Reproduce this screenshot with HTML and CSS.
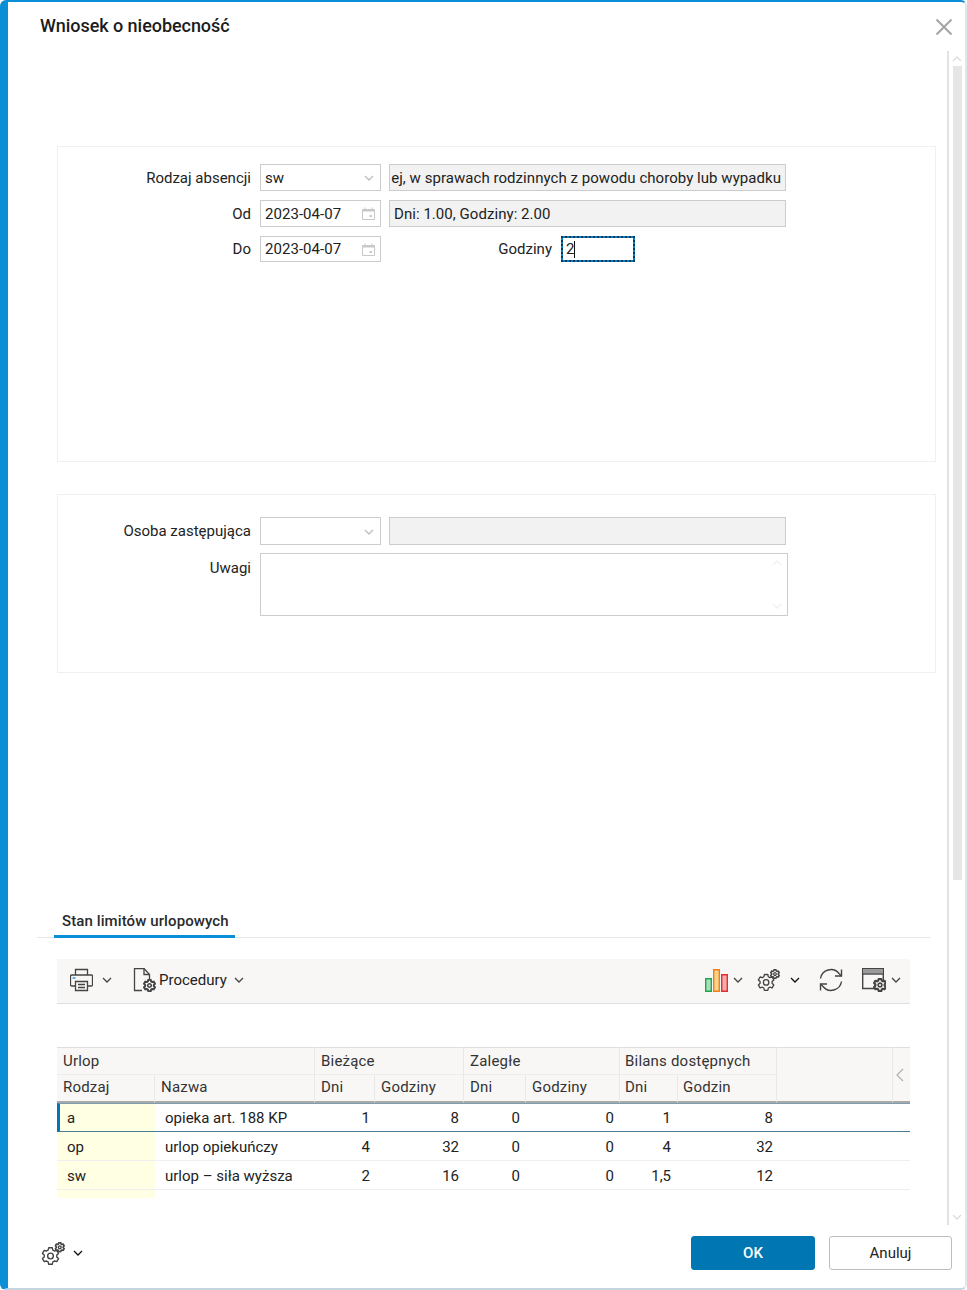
FILE: index.html
```html
<!DOCTYPE html>
<html lang="pl">
<head>
<meta charset="utf-8">
<title>Wniosek o nieobecność</title>
<link rel="stylesheet" href="styles.css">
</head>
<body>
<svg class="defs" width="0" height="0" aria-hidden="true">
  <symbol id="gear" viewBox="-9 -9 18 18">
    <path d="M-1.66-7.83L1.66-7.83L2.25-5.56L3.69-4.73L5.95-5.35L7.61-2.47L5.94-.84L5.94.84L7.61 2.47L5.95 5.35L3.69 4.73L2.25 5.56L1.66 7.83L-1.66 7.83L-2.25 5.56L-3.69 4.73L-5.95 5.35L-7.61 2.47L-5.94.84L-5.94-.84L-7.61-2.47L-5.95-5.35L-3.69-4.73L-2.25-5.56Z" fill="none" stroke="#444" stroke-width="1.3" stroke-linejoin="round"/>
    <circle r="2.7" fill="none" stroke="#444" stroke-width="1.3"/>
  </symbol>
  <symbol id="gear-small" viewBox="-9 -9 18 18">
    <path d="M-1.66-7.83L1.66-7.83L2.25-5.56L3.69-4.73L5.95-5.35L7.61-2.47L5.94-.84L5.94.84L7.61 2.47L5.95 5.35L3.69 4.73L2.25 5.56L1.66 7.83L-1.66 7.83L-2.25 5.56L-3.69 4.73L-5.95 5.35L-7.61 2.47L-5.94.84L-5.94-.84L-7.61-2.47L-5.95-5.35L-3.69-4.73L-2.25-5.56Z" fill="#fff" stroke="#444" stroke-width="2.8" stroke-linejoin="round"/>
    <circle r="2.4" fill="none" stroke="#444" stroke-width="2.2"/>
  </symbol>
  <symbol id="chev" viewBox="0 0 10 6">
    <path d="M1 1l4 4 4-4" fill="none" stroke="currentColor" stroke-width="1.3"/>
  </symbol>
  <symbol id="cal" viewBox="0 0 13 13">
    <path d="M.5 2.5h12v10H.5z" fill="#fff" stroke="#c8c8c8"/>
    <path d="M.5 2h12v2.5H.5z" fill="#c8c8c8"/>
    <path d="M3 .5v2M10 .5v2" stroke="#c8c8c8"/>
    <path d="M7.5 8h2.5v2H7.5z" fill="#c8c8c8"/>
  </symbol>
  <symbol id="gears" viewBox="0 0 24 24">
    <use href="#gear" x="0" y="4.500" width="19" height="19"/>
    <use href="#gear-small" x="13.500" y="0" width="10.500" height="10.500"/>
  </symbol>
</svg>

<div class="dialog">
  <header class="head">
    <h1 class="title">Wniosek o nieobecność</h1>
    <svg class="close" width="18" height="18" viewBox="0 0 18 18"><path d="M1.5 1.5l15 15M16.5 1.5l-15 15" stroke="#a3a3a3" stroke-width="2" fill="none"/></svg>
  </header>

  <div class="middle">
    <main class="content">
      <section class="panel panel-a">
        <div class="form">
          <label class="lab">Rodzaj absencji</label>
          <div class="field sel">sw<svg class="chev-in" width="10" height="6"><use href="#chev"/></svg></div>
          <div class="field ro wide clip">ej, w sprawach rodzinnych z powodu choroby lub wypadku</div>

          <label class="lab">Od</label>
          <div class="field sel">2023-04-07<svg class="cal" width="13" height="13"><use href="#cal"/></svg></div>
          <div class="field ro wide">Dni: 1.00, Godziny: 2.00</div>

          <label class="lab">Do</label>
          <div class="field sel short">2023-04-07<svg class="cal" width="13" height="13"><use href="#cal"/></svg></div>
          <div class="hours">
            <label class="lab">Godziny</label>
            <div class="focus"><span>2</span><i class="caret"></i></div>
          </div>
        </div>
      </section>

      <section class="panel panel-b">
        <div class="form">
          <label class="lab">Osoba zastępująca</label>
          <div class="field sel tall"><svg class="chev-in" width="10" height="6"><use href="#chev"/></svg></div>
          <div class="field ro wide tall"></div>

          <label class="lab lab-top">Uwagi</label>
          <div class="area">
            <svg class="area-up" width="10" height="6"><use href="#chev"/></svg>
            <svg class="area-down" width="10" height="6"><use href="#chev"/></svg>
          </div>
        </div>
      </section>

      <nav class="tabs"><span class="tab">Stan limitów urlopowych</span></nav>

      <div class="toolbar">
        <svg class="t-print" width="23" height="24" viewBox="0 0 23 24" fill="none" stroke="#444" stroke-width="1.3">
          <path d="M5.500 7V1.500h12V7"/>
          <path d="M5 18H1.500a1 1 0 0 1-1-1V8a1 1 0 0 1 1-1h20a1 1 0 0 1 1 1v9a1 1 0 0 1-1 1H18"/>
          <path d="M5.500 13.500h12v9h-12z"/>
          <path d="M8 16.500h7M8 19.500h7"/>
          <path d="M2.500 10h3" stroke="#0a8fd6"/>
        </svg>
        <svg class="chev-dark t-ch1" width="10" height="6"><use href="#chev"/></svg>
        <svg class="t-doc" width="23" height="24" viewBox="0 0 23 24" fill="none" stroke="#444" stroke-width="1.3">
          <path d="M9 22.500H1.500v-22h9.500l5.500 6v5"/>
          <path d="M11 .5v6h5.500"/>
          <use href="#gear-small" x="10" y="11" width="13" height="13"/>
        </svg>
        <span class="t-label">Procedury</span>
        <svg class="chev-dark t-ch2" width="10" height="6"><use href="#chev"/></svg>

        <span class="t-spacer"></span>

        <svg width="23" height="23" viewBox="0 0 23 23">
          <path d="M.7 9.700h5.600v12.600H.7z" fill="#a9e0b8" stroke="#1fa84a" stroke-width="1.400"/>
          <path d="M8.700.7h5.600v21.600H8.700z" fill="#fbd38a" stroke="#f07f16" stroke-width="1.400"/>
          <path d="M16.700 5.700h5.600v16.600h-5.600z" fill="#f7a9ac" stroke="#e42d32" stroke-width="1.400"/>
        </svg>
        <svg class="chev-dark t-ch3" width="10" height="6"><use href="#chev"/></svg>
        <svg class="t-gears" width="23" height="23"><use href="#gears"/></svg>
        <svg class="chev-blk t-ch4" width="10" height="6"><use href="#chev"/></svg>
        <svg class="t-refresh" width="24" height="24" viewBox="0 0 24 24" fill="none" stroke="#444" stroke-width="1.400">
          <path d="M1.500 10.500A10.500 10.500 0 0 1 20 5.500l2.500 2.500"/>
          <path d="M22.500 1.500V8H16"/>
          <path d="M22.500 13.500A10.500 10.500 0 0 1 4 18.500L1.500 16"/>
          <path d="M1.500 22.500V16H8"/>
        </svg>
        <svg class="t-window" width="24" height="24" viewBox="0 0 24 24" fill="none" stroke="#444" stroke-width="1.400">
          <path d="M12 20.500H.7V.7h20.600V12"/>
          <path d="M1 1h20v4.500H1z" fill="#9a9a9a" stroke="none"/>
          <path d="M.7 6h20.600"/>
          <use href="#gear-small" x="11" y="10" width="14" height="14"/>
        </svg>
        <svg class="chev-dark t-ch5" width="10" height="6"><use href="#chev"/></svg>
      </div>

      <table class="grid">
        <colgroup>
          <col class="c-a"><col class="c-b"><col class="c-c"><col class="c-d"><col class="c-e"><col class="c-f"><col class="c-g"><col class="c-h"><col class="c-i"><col class="c-j">
        </colgroup>
        <thead>
          <tr class="h1">
            <th colspan="2">Urlop</th>
            <th colspan="2">Bieżące</th>
            <th colspan="2">Zaległe</th>
            <th colspan="2" class="tight">Bilans dostępnych</th>
            <th rowspan="2" class="blank"></th>
            <th rowspan="2" class="arrow"><svg width="8" height="14" viewBox="0 0 8 14"><path d="M7 1L1 7l6 6" fill="none" stroke="#b0b0b0" stroke-width="1.200"/></svg></th>
          </tr>
          <tr class="h2">
            <th>Rodzaj</th><th>Nazwa</th><th>Dni</th><th>Godziny</th><th>Dni</th><th>Godziny</th><th class="tight">Dni</th><th class="tight">Godzin</th>
          </tr>
        </thead>
        <tbody>
          <tr class="row current">
            <td class="key">a</td><td class="name">opieka art. 188 KP</td><td class="n">1</td><td class="n">8</td><td class="n n-e">0</td><td class="n n-e">0</td><td class="n n-g">1</td><td class="n n-h">8</td><td colspan="2"></td>
          </tr>
          <tr class="row">
            <td class="key">op</td><td class="name">urlop opiekuńczy</td><td class="n">4</td><td class="n">32</td><td class="n n-e">0</td><td class="n n-e">0</td><td class="n n-g">4</td><td class="n n-h">32</td><td colspan="2"></td>
          </tr>
          <tr class="row">
            <td class="key">sw</td><td class="name">urlop – siła wyższa</td><td class="n">2</td><td class="n">16</td><td class="n n-e">0</td><td class="n n-e">0</td><td class="n n-g">1,5</td><td class="n n-h">12</td><td colspan="2"></td>
          </tr>
          <tr class="filler"><td class="key"></td><td colspan="9"></td></tr>
        </tbody>
      </table>
    </main>

    <aside class="rail">
      <svg class="rail-ch up" width="10" height="6"><use href="#chev"/></svg>
      <div class="thumb"></div>
      <span class="rail-gap"></span>
      <svg class="rail-ch" width="10" height="6"><use href="#chev"/></svg>
    </aside>
  </div>

  <footer class="foot">
    <svg class="foot-gears" width="24" height="24"><use href="#gears"/></svg>
    <svg class="chev-blk foot-ch" width="10" height="6"><use href="#chev"/></svg>
    <span class="t-spacer"></span>
    <button class="btn primary">OK</button>
    <button class="btn cancel">Anuluj</button>
  </footer>
</div>
</body>
</html>
```

FILE: styles.css
```css
* { box-sizing: border-box; }
html, body { margin: 0; padding: 0; }
body {
  width: 967px;
  height: 1290px;
  overflow: hidden;
  background: #fff;
  font-family: Roboto, "Liberation Sans", sans-serif;
  font-size: 15px;
  color: #222;
}
.defs { position: absolute; }
svg { display: block; flex: none; }

.dialog {
  width: 967px;
  height: 1290px;
  display: flex;
  flex-direction: column;
  background: #fff;
  border-style: solid;
  border-color: #0a8fd6 #dfe8ee #c5d6e0 #0a8fd6;
  border-width: 2px 2px 2px 8px;
  border-radius: 6px;
}

.head {
  height: 49px;
  flex: none;
  display: flex;
  justify-content: space-between;
  padding: 13px 12px 0 32px;
}
.title {
  margin: 0;
  font-size: 18px;
  font-weight: 500;
  line-height: 21px;
  letter-spacing: -.05px;
  color: #1c1c1c;
}
.close { margin-top: 3px; }

.middle { flex: 1; display: flex; min-height: 0; }
.content { flex: 1; min-width: 0; padding-top: 95px; }

.rail {
  width: 18px;
  flex: none;
  border-left: 2px solid #e2e2e2;
  display: flex;
  flex-direction: column;
  align-items: center;
  padding: 5px 0;
  color: #dcdcdc;
}
.rail-ch.up { transform: scaleY(-1); }
.thumb { width: 9px; height: 814px; margin-top: 4px; background: #e6e6e6; }
.rail-gap { flex: 1; }

.panel {
  margin: 0 11px 0 49px;
  border: 1px solid #f0f0f0;
}
.panel-a { height: 316px; padding-top: 17px; }
.panel-b { height: 179px; margin-top: 32px; padding-top: 22px; }
.panel-b .form { row-gap: 8px; }

.form {
  display: grid;
  grid-template-columns: 193px 121px 397px;
  column-gap: 9px;
  row-gap: 9px;
  grid-auto-rows: min-content;
}
.lab { text-align: right; align-self: center; }
.lab-top { align-self: start; padding-top: 6px; }

.field {
  height: 27px;
  border: 1px solid #cccccc;
  padding: 1px 4px 0;
  display: flex;
  align-items: center;
  justify-content: space-between;
  white-space: nowrap;
  overflow: hidden;
  letter-spacing: .05px;
  background: #fff;
}
.field.ro { background: #f2f2f2; }
.field.wide { margin-left: -1px; width: 397px; }
.field.clip { justify-content: flex-end; }
.field.tall { height: 28px; }
.field.short { height: 26px; padding-top: 0; }
.chev-in { color: #bdbdbd; margin-left: auto; margin-right: 2px; }
.cal { margin: -1px 1px 0 0; }
.short .cal { margin-top: 0; }

.hours {
  display: grid;
  grid-template-columns: 162px 74px;
  column-gap: 9px;
  align-items: center;
}
.focus {
  height: 26px;
  border: 2px solid #0a7fc0;
  outline: 2px dotted #063a5c;
  outline-offset: -2px;
  padding-left: 3px;
  display: flex;
  align-items: center;
}
.caret { width: 1px; height: 17px; background: #111; }

.area {
  grid-column: 2 / 4;
  width: 528px;
  height: 63px;
  border: 1px solid #cccccc;
  position: relative;
  color: #f0f0f0;
}
.area-up, .area-down { position: absolute; right: 5px; }
.area-up { top: 6px; transform: scaleY(-1); }
.area-down { bottom: 6px; }

.tabs {
  margin: 236px 17px 0 29px;
  height: 29px;
  border-bottom: 1px solid #e6e6e6;
  padding-left: 17px;
}
.tab {
  display: block;
  width: 181px;
  height: 29px;
  padding: 4px 0 0 8px;
  border-bottom: 3px solid #0a8fd6;
  font-weight: 500;
  font-size: 15px;
  line-height: 17px;
  letter-spacing: .1px;
  color: #2a2a2a;
  white-space: nowrap;
}

.toolbar {
  margin: 21px 37px 0 49px;
  height: 45px;
  background: #f8f7f5;
  border-bottom: 1px solid #dedede;
  display: flex;
  align-items: center;
  padding: 0 9px 2px 13px;
}
.t-spacer { flex: 1; }
.chev-dark { color: #444; }
.chev-blk { color: #111; }
.t-ch1 { margin-left: 9px; }
.t-doc { margin-left: 21px; }
.t-label { margin-left: 3px; }
.t-ch2 { margin-left: 7px; }
.t-ch3 { margin-left: 5px; }
.t-gears { margin-left: 14px; }
.t-ch4 { margin-left: 10px; }
.t-refresh { margin-left: 19px; }
.t-window { margin-left: 19px; }
.t-ch5 { margin-left: 5px; }

.grid {
  margin: 43px 0 0 49px;
  width: 853px;
  table-layout: fixed;
  border-collapse: separate;
  border-spacing: 0;
}
.c-a { width: 98px; } .c-b { width: 160px; } .c-c { width: 60px; } .c-d { width: 89px; }
.c-e { width: 62px; } .c-f { width: 94px; } .c-g { width: 58px; } .c-h { width: 99px; }
.c-i { width: 116px; } .c-j { width: 17px; }

th {
  background: #f8f7f5;
  font-weight: 400;
  text-align: left;
  padding: 0 0 0 6px;
  color: #333;
  border-right: 1px solid #e8e8e8;
  letter-spacing: .2px;
}
.h1 th { height: 28px; border-top: 1px solid #dedede; border-bottom: 1px solid #ececec; }
.h2 th { height: 28px; padding-bottom: 2px; border-bottom: 2px solid #a9a9a9; }
th.tight { padding-left: 5px; }
.h1 .blank { border-right: 1px solid #e8e8e8; border-bottom: 2px solid #a9a9a9; }
.h1 .arrow { border-right: 0; border-bottom: 2px solid #a9a9a9; padding: 0 0 0 3px; }

td {
  height: 29px;
  padding: 1px 0 0;
  border-bottom: 1px solid #efefef;
  white-space: nowrap;
}
.key { background: #ffffe4; padding-left: 10px; }
.name { padding-left: 10px; }
.n { text-align: right; padding-right: 5px; }
.n-e { padding-right: 6px; }
.n-g { padding-right: 7px; }
.n-h { padding-right: 4px; }
.current td { border-top: 1px solid #7d9db3; border-bottom: 1px solid #4f7a96; }
.current .key { border-left: 3px solid #0077b3; padding-left: 7px; }
.filler td { height: 8px; border: 0; padding: 0; }

.foot {
  flex: none;
  height: 63px;
  display: flex;
  align-items: flex-start;
  padding: 11px 13px 0 33px;
}
.foot-gears { margin-top: 6px; }
.foot-ch { margin: 14px 0 0 8px; }
.btn {
  width: 124px;
  height: 34px;
  margin-left: 14px;
  border: 1px solid #bdbdbd;
  border-radius: 3px;
  background: #fff;
  font: 400 15px Roboto, "Liberation Sans", sans-serif;
  color: #222;
}
.btn.cancel { width: 123px; }
.btn.primary { background: #0077b3; border-color: #0077b3; color: #fff; font-weight: 500; }
```
